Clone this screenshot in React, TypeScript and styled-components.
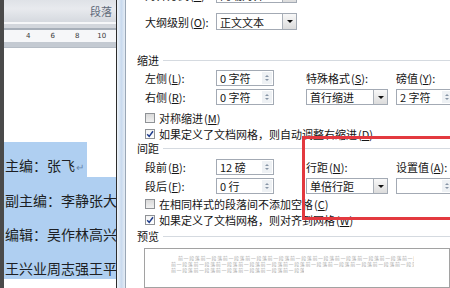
import React from "react";
import styled, { createGlobalStyle } from "styled-components";

const Global = createGlobalStyle`
  html, body { margin: 0; padding: 0; width: 450px; height: 288px; overflow: hidden; background: #fff; }
  body { font-family: "Noto Sans CJK SC", "Noto Sans", sans-serif; font-size: 11px; color: #151515; }
  #root { width: 450px; height: 288px; }
`;

const Screen = styled.div`
  display: flex;
  width: 450px;
  height: 288px;
  overflow: hidden;
`;

const EdgeStrip = styled.div`
  width: 4px;
  flex: none;
  background: #4a4a4a;
`;

const DocPane = styled.div`
  width: 112px;
  flex: none;
  display: flex;
  flex-direction: column;
  background: #fff;
  overflow: hidden;
`;

const RibbonGroup = styled.div`
  height: 22px;
  flex: none;
  display: flex;
  align-items: center;
  justify-content: flex-end;
  padding-right: 4px;
  box-sizing: border-box;
  background: linear-gradient(#dfe2e7, #e8eaee 40%, #d5d9df);
  color: #5f6a79;
  font-size: 11px;
`;

const RibbonBase = styled.div`
  height: 8px;
  flex: none;
  background: linear-gradient(#f6f7f9 0 2px, #d2d6dc 2px 6px, #a7afb9 6px);
`;

const Ruler = styled.div`
  height: 12px;
  flex: none;
  display: flex;
  align-items: center;
  padding-left: 12px;
  background: #f6f7f9;
  font-family: "DejaVu Sans", sans-serif;
  font-size: 7px;
  color: #3a3a3a;
`;

const RulerNum = styled.span`
  width: 24.5px;
  flex: none;
  text-align: center;
`;

const RulerBottom = styled.div`
  height: 5px;
  flex: none;
  background: #c4cad2;
  border-bottom: 1px solid #b5bcc5;
`;

const Page = styled.div`
  flex: 1;
  padding-top: 94px;
  white-space: nowrap;
`;

const DocLine = styled.div<{ $partial?: boolean }>`
  display: ${(p) => (p.$partial ? "table" : "block")};
  height: 34px;
  box-sizing: border-box;
  padding: 13px ${(p) => (p.$partial ? 3 : 1)}px 0 1px;
  line-height: 20px;
  font-size: 14px;
  color: #1d1f24;
  background: #afcff1;
`;

const ParaMark = styled.span`
  font-size: 10px;
  color: #6b88ad;
  margin-left: 1px;
`;

const WindowFrame = styled.div`
  width: 10px;
  flex: none;
  box-sizing: border-box;
  border-left: 1px solid #2c2c2c;
  border-right: 1px solid #9aa7b6;
  background: linear-gradient(to right, #eef3f8, #c9daee 55%, #e4ecf5);
`;

const Dialog = styled.div`
  flex: 1;
  position: relative;
  overflow: hidden;
  display: flex;
  flex-direction: column;
  padding-left: 11px;
  background: #fff;
  white-space: nowrap;
`;

const FieldGrid = styled.div<{ $row: number; $gap: number; $mt: number }>`
  display: grid;
  grid-template-columns: 71px 90px 90px 80px;
  grid-auto-rows: ${(p) => p.$row}px;
  row-gap: ${(p) => p.$gap}px;
  align-items: center;
  padding-left: 8px;
  margin-top: ${(p) => p.$mt}px;
  line-height: 14px;
`;

const Key = styled.span`
  margin-left: 1px;
  & u { text-underline-offset: 1px; }
`;

const SelectBox = styled.div<{ $w: number }>`
  width: ${(p) => p.$w}px;
  height: 100%;
  box-sizing: border-box;
  border: 1px solid #a3aab4;
  background: #fff;
  display: flex;
  align-items: center;
`;

const FieldText = styled.span`
  flex: 1;
  padding-left: 3px;
  overflow: hidden;
`;

const DropButton = styled.span`
  width: 14px;
  height: 100%;
  box-sizing: border-box;
  border-left: 1px solid #aab0b8;
  background: linear-gradient(#f8f8f8, #dcdcdc);
  display: flex;
  align-items: center;
  justify-content: center;
  &::after {
    content: "";
    border-left: 3px solid transparent;
    border-right: 3px solid transparent;
    border-top: 3px solid #111;
  }
`;

const SpinBox = styled.div<{ $w: number }>`
  width: ${(p) => p.$w}px;
  height: 100%;
  box-sizing: border-box;
  border: 1px solid #a3aab4;
  background: #fff;
  display: flex;
  align-items: center;
`;

const SpinArrows = styled.span`
  width: 10px;
  height: 12px;
  margin-right: 1px;
  background: #eef1f4;
  display: flex;
  flex-direction: column;
  align-items: center;
  justify-content: center;
  gap: 2px;
  &::before {
    content: "";
    border-left: 2px solid transparent;
    border-right: 2px solid transparent;
    border-bottom: 2px solid #8795a6;
  }
  &::after {
    content: "";
    border-left: 2px solid transparent;
    border-right: 2px solid transparent;
    border-top: 2px solid #8795a6;
  }
`;

const SectionHead = styled.div<{ $mt: number }>`
  display: flex;
  align-items: center;
  gap: 4px;
  height: 12px;
  line-height: 12px;
  margin-top: ${(p) => p.$mt}px;
  &::after {
    content: "";
    flex: 1;
    height: 1px;
    background: #d5dae0;
  }
`;

const CheckRow = styled.div<{ $mt?: number }>`
  display: flex;
  align-items: center;
  gap: 4px;
  height: 18px;
  padding-left: 8px;
  margin-top: ${(p) => p.$mt ?? 0}px;
`;

const CheckBox = styled.span<{ $checked?: boolean }>`
  width: 10px;
  height: 10px;
  flex: none;
  box-sizing: border-box;
  border: 1px solid #8f9296;
  background: ${(p) => (p.$checked ? "linear-gradient(#f4f4f4, #ffffff)" : "linear-gradient(#d9d9d9, #f1f1f1)")};
  display: flex;
  align-items: center;
  justify-content: center;
`;

const PreviewBox = styled.div`
  margin: 6px 0 0 7px;
  height: 60px;
  box-sizing: border-box;
  border: 1px solid #a2a2a2;
  padding: 6px 0 0 26px;
  display: flex;
  flex-direction: column;
`;

const PreviewLine = styled.div<{ $indent: number; $w: number }>`
  margin-left: ${(p) => p.$indent}px;
  width: ${(p) => p.$w}px;
  height: 6px;
  overflow: hidden;
  white-space: nowrap;
  font-size: 5px;
  line-height: 6px;
  letter-spacing: 0.6px;
  color: #acacac;
`;

const RedMark = styled.div`
  position: absolute;
  left: 176px;
  top: 136px;
  width: 200px;
  height: 84px;
  box-sizing: border-box;
  border: 3px solid #e3393f;
  pointer-events: none;
`;

const Mn = ({ k }: { k: string }) => (
  <Key>
    (<u>{k}</u>):
  </Key>
);

const Select = ({ w, text }: { w: number; text: string }) => (
  <SelectBox $w={w}>
    <FieldText>{text}</FieldText>
    <DropButton />
  </SelectBox>
);

const Spinner = ({ w, text }: { w: number; text: string }) => (
  <SpinBox $w={w}>
    <FieldText>{text}</FieldText>
    <SpinArrows />
  </SpinBox>
);

const Check = ({ checked, label, k, mt }: { checked?: boolean; label: string; k: string; mt?: number }) => (
  <CheckRow $mt={mt}>
    <CheckBox $checked={checked}>
      {checked && (
        <svg width="8" height="8" viewBox="0 0 8 8">
          <path d="M1.2 4.2 L3.2 6.4 L7 1.2" fill="none" stroke="#1f3c8c" strokeWidth="1.5" />
        </svg>
      )}
    </CheckBox>
    <span>
      {label}
      <Key>
        (<u>{k}</u>)
      </Key>
    </span>
  </CheckRow>
);

const PREV = "前一段落".repeat(16);

export default function App() {
  return (
    <>
      <Global />
      <Screen>
        <EdgeStrip />
        <DocPane>
          <RibbonGroup>段落</RibbonGroup>
          <RibbonBase />
          <Ruler>
            <RulerNum>4</RulerNum>
            <RulerNum>6</RulerNum>
            <RulerNum>8</RulerNum>
            <RulerNum>10</RulerNum>
          </Ruler>
          <RulerBottom />
          <Page>
            <DocLine $partial>
              主编：张飞<ParaMark>↵</ParaMark>
            </DocLine>
            <DocLine>副主编：李静张大</DocLine>
            <DocLine>编辑：吴作林高兴</DocLine>
            <DocLine>王兴业周志强王平</DocLine>
          </Page>
        </DocPane>
        <WindowFrame />
        <Dialog>
          <FieldGrid $row={17} $gap={10} $mt={-14}>
            <span>
              对齐方式<Mn k="G" />
            </span>
            <Select w={81} text="两端对齐" />
            <span />
            <span />
            <span>
              大纲级别<Mn k="O" />
            </span>
            <Select w={81} text="正文文本" />
          </FieldGrid>

          <SectionHead $mt={24}>缩进</SectionHead>
          <FieldGrid $row={16} $gap={3} $mt={4}>
            <span>
              左侧<Mn k="L" />
            </span>
            <Spinner w={58} text="0 字符" />
            <span>
              特殊格式<Mn k="S" />
            </span>
            <span>
              磅值<Mn k="Y" />
            </span>
            <span>
              右侧<Mn k="R" />
            </span>
            <Spinner w={58} text="0 字符" />
            <Select w={82} text="首行缩进" />
            <Spinner w={58} text="2 字符" />
          </FieldGrid>
          <Check label="对称缩进" k="M" mt={5} />
          <Check checked label="如果定义了文档网格，则自动调整右缩进" k="D" />

          <SectionHead $mt={0}>间距</SectionHead>
          <FieldGrid $row={16} $gap={3} $mt={5}>
            <span>
              段前<Mn k="B" />
            </span>
            <Spinner w={58} text="12 磅" />
            <span>
              行距<Mn k="N" />
            </span>
            <span>
              设置值<Mn k="A" />
            </span>
            <span>
              段后<Mn k="F" />
            </span>
            <Spinner w={58} text="0 行" />
            <Select w={82} text="单倍行距" />
            <Spinner w={58} text="" />
          </FieldGrid>
          <Check label="在相同样式的段落间不添加空格" k="C" mt={2} />
          <Check checked label="如果定义了文档网格，则对齐到网格" k="W" />

          <SectionHead $mt={2}>预览</SectionHead>
          <PreviewBox>
            <PreviewLine $indent={7} $w={236}>{PREV}</PreviewLine>
            <PreviewLine $indent={0} $w={243}>{PREV}</PreviewLine>
            <PreviewLine $indent={0} $w={133}>{PREV}</PreviewLine>
          </PreviewBox>
          <RedMark />
        </Dialog>
      </Screen>
    </>
  );
}
